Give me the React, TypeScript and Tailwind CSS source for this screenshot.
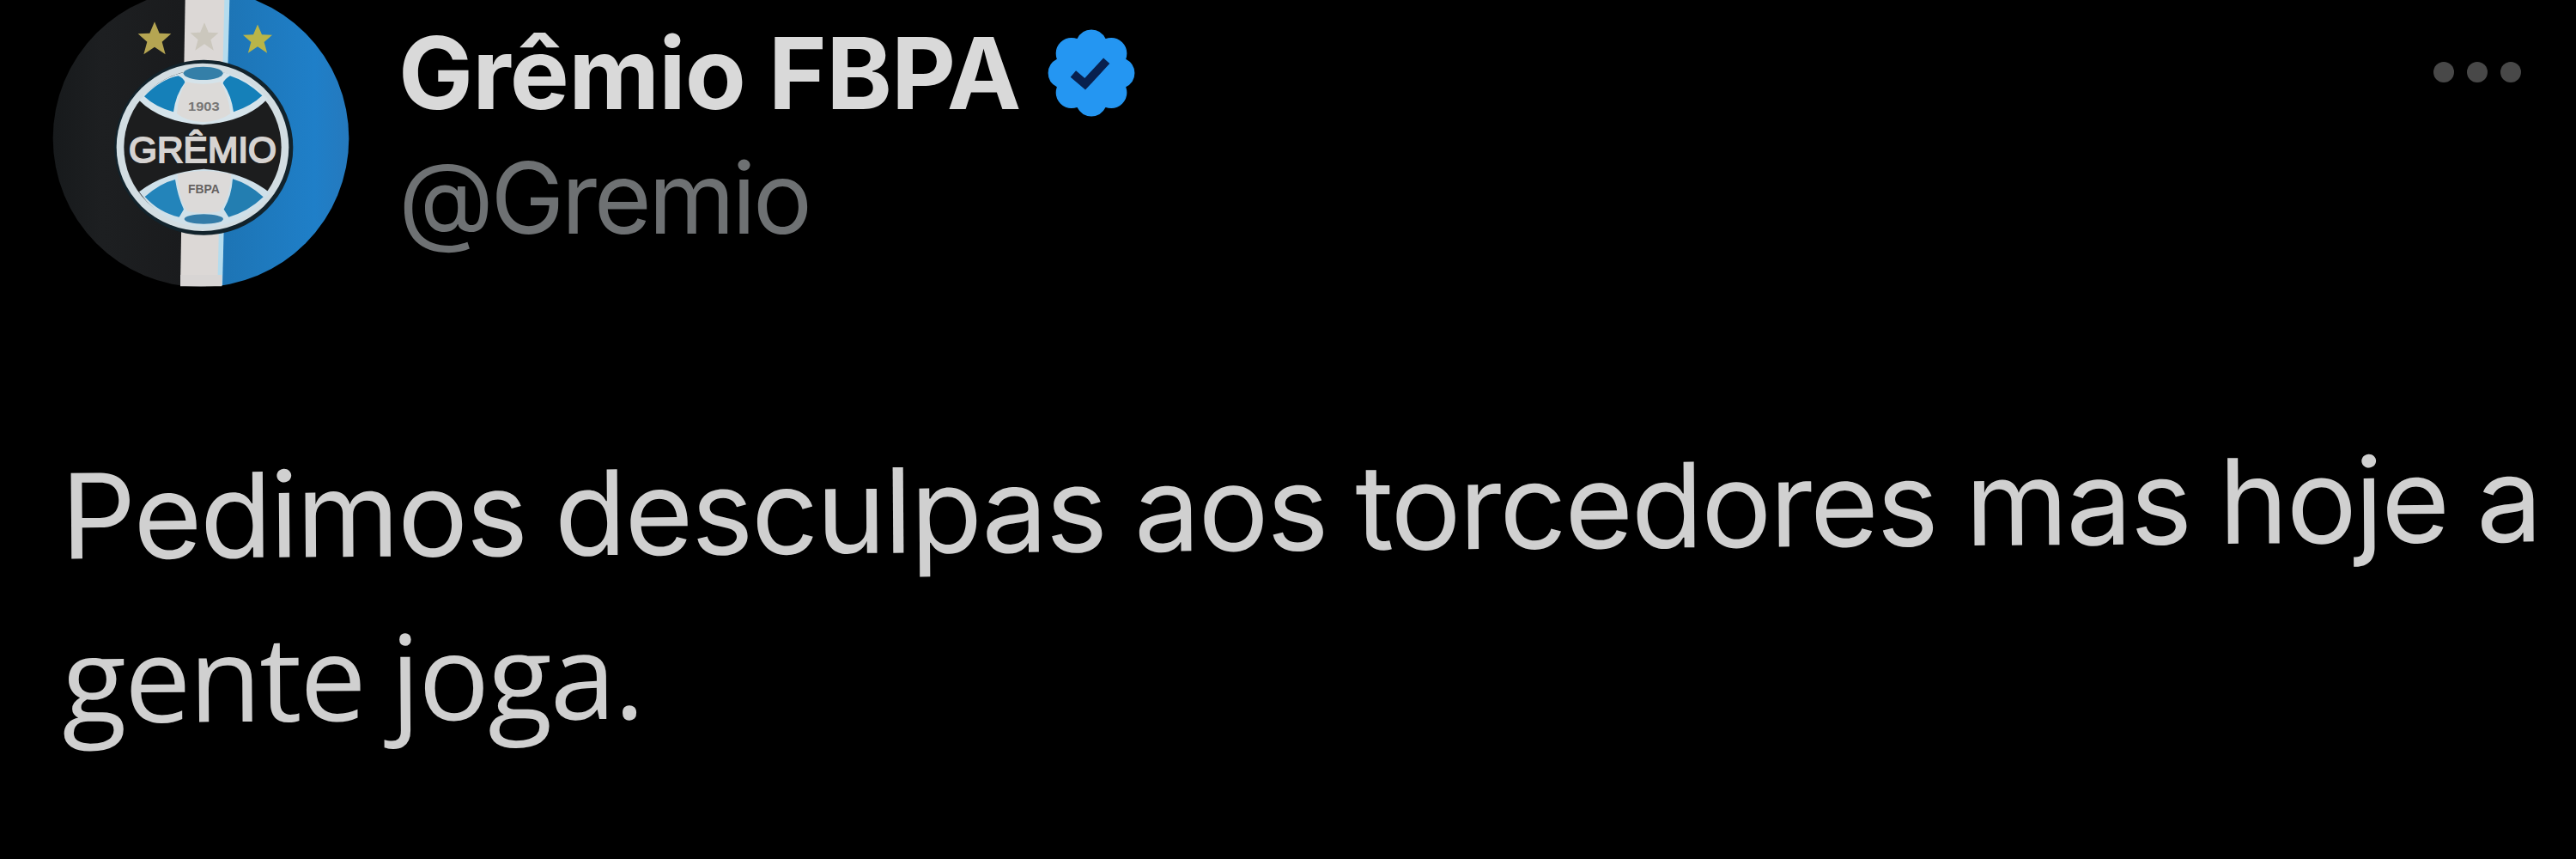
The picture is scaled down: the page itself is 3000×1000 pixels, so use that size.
const STAR = "M0 -60L17 -20L58 -18L26 10L38 54L0 28L-38 54L-26 10L-58 -18L-17 -20Z";

function Crest() {
  return (
    <svg viewBox="0 0 1200 1050" className="h-[350px] w-[400px] shrink-0" aria-label="Grêmio">
      <defs>
        <clipPath id="avatar">
          <ellipse cx="582" cy="483" rx="517" ry="519" />
        </clipPath>
        <clipPath id="ball">
          <ellipse cx="590" cy="514" rx="290" ry="285" />
        </clipPath>
        <linearGradient id="sky" x1="0" x2="1">
          <stop offset="0" stopColor="#1d74b4" />
          <stop offset="0.6" stopColor="#1f7fc8" />
          <stop offset="1" stopColor="#2a74b4" />
        </linearGradient>
        <linearGradient id="coal" x1="0" x2="1">
          <stop offset="0" stopColor="#15181a" />
          <stop offset="0.4" stopColor="#1d1f21" />
          <stop offset="1" stopColor="#191a1c" />
        </linearGradient>
      </defs>
      <g clipPath="url(#avatar)">
        <rect width="600" height="1050" fill="url(#coal)" />
        <path d="M670 0H1200V1050H650Z" fill="url(#sky)" />
        <path d="M527 0H680L655 1000H510Z" fill="#dcd8d6" />
        <path d="M664 0H682L657 1000H640Z" fill="#b5dcee" />
      </g>
      <path d="M510 960H655V1000H510Z" fill="#d8d5d4" />
      <path d={STAR} transform="translate(420 136)" fill="#b5a552" />
      <path d={STAR} transform="translate(594 130) scale(.85)" fill="#cbc7bd" />
      <path d={STAR} transform="translate(780 138) scale(.88)" fill="#b9b548" />

      <ellipse cx="592" cy="515" rx="312" ry="306" fill="#12232c" />
      <ellipse cx="588" cy="514" rx="301" ry="293" fill="#d2dde2" />
      <g clipPath="url(#ball)">
        <ellipse cx="588" cy="514" rx="275" ry="270" fill="#1c1d1e" />
        <path d="M366 350Q450 250 588 242Q730 250 815 345Q740 425 588 436Q440 425 366 350Z" fill="#d5e3ea" />
        <path d="M384 337Q440 278 503 265Q522 273 526 288Q494 330 486 391Q423 374 384 337Z" fill="#1580b9" />
        <path d="M796 334Q742 283 684 265Q663 277 659 291Q689 335 696 391Q759 370 796 334Z" fill="#1580b9" />
        <ellipse cx="590" cy="256" rx="69" ry="23" fill="#347fa8" />
        <path d="M530 286Q588 300 650 286Q679 335 685 397Q650 424 588 426Q530 424 498 397Q502 335 530 286Z" fill="#dcdad8" />

        <path d="M366 670Q450 602 592 590Q735 602 822 673Q740 790 588 794Q445 785 366 670Z" fill="#cfe0e9" />
        <path d="M386 687Q441 639 492 627Q501 686 522 731L506 758Q435 742 386 687Z" fill="#2384ba" />
        <path d="M800 688Q750 642 693 625Q689 684 662 731L679 758Q746 740 800 688Z" fill="#237eb1" />
        <path d="M500 608Q592 586 688 608Q683 690 648 738Q592 751 534 738Q503 690 500 608Z" fill="#dcdad9" />
        <ellipse cx="592" cy="765" rx="68" ry="17" fill="#347ca8" />
      </g>
      <g fontFamily="'Liberation Sans', Arial, sans-serif" fontWeight="700" textAnchor="middle">
        <text x="588" y="567" fontSize="129" fill="#d6d3d1" fontWeight="400" stroke="#d6d3d1" strokeWidth="6" textLength="516" lengthAdjust="spacingAndGlyphs">
          GRÊMIO
        </text>
        <text x="592" y="386" fontSize="46" fill="#777675" textLength="110" lengthAdjust="spacingAndGlyphs">
          1903
        </text>
        <text x="592" y="675" fontSize="44" fill="#656161" textLength="110" lengthAdjust="spacingAndGlyphs">
          FBPA
        </text>
      </g>
    </svg>
  );
}

function VerifiedBadge() {
  return (
    <svg viewBox="0 0 24 24" className="h-[122px] w-[118px] shrink-0" aria-label="Verified">
      <path
        fill="#2496f2"
        stroke="#2496f2"
        strokeWidth="0.3"
        strokeLinejoin="round"
        d="M22.1 12c0-1.43-.8-2.57-2.09-3.24.46-1.39.2-2.9-.81-3.91s-2.52-1.27-3.91-.81c-.66-1.31-1.86-2.14-3.29-2.14s-2.62.83-3.28 2.14c-1.4-.46-2.91-.2-3.92.81s-1.26 2.52-.8 3.91c-1.31.67-2.1 1.81-2.1 3.24s.79 2.57 2.1 3.24c-.46 1.39-.21 2.9.8 3.91s2.52 1.26 3.91.81c.67 1.31 1.86 2.14 3.29 2.14s2.63-.83 3.29-2.14c1.39.45 2.9.2 3.91-.81s1.27-2.52.81-3.91c1.31-.67 2.09-1.81 2.09-3.24z"
      />
      <path d="M7.7 12.2L10.5 14.6L15.6 9.1" fill="none" stroke="#08204f" strokeWidth="2" />
    </svg>
  );
}

export default function App() {
  return (
    <article className="h-[1000px] w-[3000px] overflow-hidden bg-black font-['Inter','Liberation_Sans',sans-serif]">
      <header className="flex h-[350px] items-start pl-10">
        <Crest />
        <div className="flex flex-1 flex-col pl-[24px] pt-[9px]">
          <div className="flex h-[152px] items-center">
            <h1 className="w-[748px] whitespace-nowrap text-[116px] font-bold leading-[152px] tracking-[-0.8px] text-[#d9d9d9]">
              Grêmio FBPA
            </h1>
            <VerifiedBadge />
          </div>
          <p className="whitespace-nowrap text-[115px] leading-[140px] tracking-[-3.5px] text-[#6e7173]">@Gremio</p>
        </div>
        <button className="mr-[64px] mt-[72px] flex gap-[15px]" aria-label="More">
          <span className="size-6 rounded-full bg-[#484848]" />
          <span className="size-6 rounded-full bg-[#484848]" />
          <span className="size-6 rounded-full bg-[#484848]" />
        </button>
      </header>

      <p className="origin-left -rotate-[0.4deg] whitespace-nowrap pl-[71px] pt-[157px] text-[137px] leading-[188px] tracking-[-2.35px] text-[#d0d0d0] [word-spacing:-3px]">
        Pedimos desculpas aos torcedores mas hoje a
        <br />
        <span className="font-['Open_Sans','Noto_Sans',sans-serif] text-[138px] leading-[186px]">gente joga.</span>
      </p>
    </article>
  );
}
